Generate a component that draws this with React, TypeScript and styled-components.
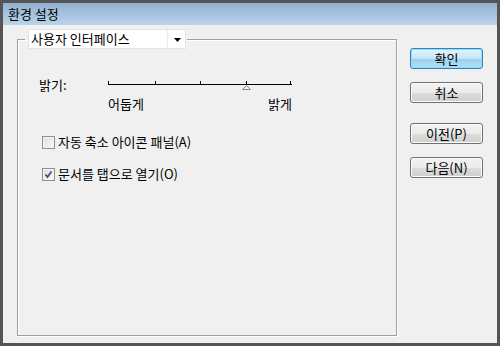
import React, { useState } from 'react';
import styled, { createGlobalStyle } from 'styled-components';

const GlobalStyle = createGlobalStyle`
  html, body {
    margin: 0;
    padding: 0;
    background: #555555;
  }
  * {
    box-sizing: border-box;
  }
`;

const FONT = `"Noto Sans CJK KR", "Noto Sans", sans-serif`;

export default function App() {
  const [autoCollapse, setAutoCollapse] = useState(false);
  const [openAsTabs, setOpenAsTabs] = useState(true);

  return (
    <>
      <GlobalStyle />
      <Window>
        <TitleBar>환경 설정</TitleBar>
        <Body>
          <Group>
            <Legend>
              <Dropdown>
                <DropdownText>사용자 인터페이스</DropdownText>
                <DropdownArrow>
                  <svg width='7' height='4' viewBox='0 0 7 4'>
                    <path d='M0 0h7L3.5 4z' fill='#000' />
                  </svg>
                </DropdownArrow>
              </Dropdown>
            </Legend>
            <Content>
              <SliderGrid>
                <Label>밝기:</Label>
                <Track />
                <span />
                <TrackLabels>
                  <span>어둡게</span>
                  <span>밝게</span>
                </TrackLabels>
              </SliderGrid>
              <CheckRow onClick={() => setAutoCollapse(!autoCollapse)} $top={24}>
                <CheckBox checked={autoCollapse} />
                <span>자동 축소 아이콘 패널(A)</span>
              </CheckRow>
              <CheckRow onClick={() => setOpenAsTabs(!openAsTabs)} $top={18}>
                <CheckBox checked={openAsTabs} />
                <span>문서를 탭으로 열기(O)</span>
              </CheckRow>
            </Content>
          </Group>
          <Buttons>
            <Button $primary>확인</Button>
            <Button $gap={13}>취소</Button>
            <Button $gap={20}>이전(P)</Button>
            <Button $gap={13}>다음(N)</Button>
          </Buttons>
        </Body>
      </Window>
    </>
  );
}

function Track() {
  const ticks = [0.5, 47.5, 92.5, 182.5];
  return (
    <svg width='184' height='14' viewBox='0 0 184 14'>
      <rect x='0' y='6' width='184' height='1' fill='#000' />
      {ticks.map((x) => (
        <line key={x} x1={x} x2={x} y1='3' y2='7' stroke='#000' strokeWidth='1' />
      ))}
      <line x1='138.5' x2='138.5' y1='3' y2='6' stroke='#000' strokeWidth='1' />
      <path d='M138.5 7.5 L142.5 11.5 L134.5 11.5 Z' fill='#f4f4f4' stroke='#8a8a8a' strokeWidth='1' />
    </svg>
  );
}

function CheckBox({ checked }: { checked: boolean }) {
  return (
    <Box>
      {checked && (
        <svg width='11' height='11' viewBox='0 0 11 11'>
          <path d='M2.5 5.5 L4.5 8 L8.5 2.5' fill='none' stroke='#3c4f8c' strokeWidth='1.8' />
        </svg>
      )}
    </Box>
  );
}

const Window = styled.div`
  width: 500px;
  height: 346px;
  border: 3px solid #555555;
  background: #f0f0f0;
  display: flex;
  flex-direction: column;
  font-family: ${FONT};
  font-size: 13px;
  color: #000;
`;

const TitleBar = styled.div`
  height: 22px;
  padding: 0 0 0 5px;
  line-height: 22px;
  font-size: 13px;
  background: linear-gradient(#93b1ce, #b9d3ec);
`;

const Body = styled.div`
  flex: 1;
  display: flex;
  padding: 4px 0 7px 14px;
`;

const Group = styled.fieldset`
  margin: 0;
  padding: 0;
  width: 380px;
  min-width: 0;
  border: 1px solid #a0a0a0;
  box-shadow: inset 1px 1px 0 #ffffff, 1px 1px 0 #ffffff;
`;

const Legend = styled.legend`
  margin-left: 7px;
  padding: 0 1px 0 3px;
`;

const Dropdown = styled.div`
  width: 158px;
  height: 20px;
  display: flex;
  background: #ffffff;
  border: 1px solid #e3e3e3;
`;

const DropdownText = styled.div`
  width: 139px;
  border-right: 1px solid #ececec;
  padding-left: 2px;
  line-height: 18px;
  font-size: 13px;
`;

const DropdownArrow = styled.div`
  flex: 1;
  display: flex;
  align-items: center;
  justify-content: center;
  padding: 1px 0 0 1px;
`;

const Content = styled.div`
  padding: 29px 0 0 21px;
`;

const SliderGrid = styled.div`
  display: grid;
  grid-template-columns: 69px 184px;
  row-gap: 5px;
  line-height: 14px;
`;

const Label = styled.span`
  line-height: 14px;
`;

const TrackLabels = styled.div`
  display: flex;
  justify-content: space-between;
  line-height: 14px;
`;

const CheckRow = styled.label<{ $top: number }>`
  display: flex;
  align-items: center;
  gap: 3px;
  margin-top: ${({ $top }) => $top}px;
  padding-left: 3px;
  line-height: 14px;
  cursor: default;
`;

const Box = styled.span`
  width: 13px;
  height: 13px;
  border: 1px solid #8e8f8f;
  background: linear-gradient(135deg, #dcdcdc, #fbfbfb);
  box-shadow: inset 0 0 0 1px #f4f4f4;
  display: flex;
  align-items: center;
  justify-content: center;
`;

const Buttons = styled.div`
  display: flex;
  flex-direction: column;
  padding: 19px 0 0 13px;
`;

const Button = styled.button<{ $primary?: boolean; $gap?: number }>`
  width: 73px;
  height: 21px;
  margin: ${({ $gap }) => $gap ?? 0}px 0 0;
  padding: 0;
  font-family: ${FONT};
  font-size: 13px;
  line-height: 19px;
  color: #000;
  border-radius: 3px;
  border: 1px solid ${({ $primary }) => ($primary ? '#3c7fb1' : '#707070')};
  background: ${({ $primary }) =>
    $primary
      ? 'linear-gradient(#e5f4fc 0%, #c4e5f6 50%, #98d1ef 51%, #b6e0f3 100%)'
      : 'linear-gradient(#f2f2f2 0%, #ebebeb 50%, #dddddd 51%, #cfcfcf 100%)'};
  box-shadow: inset 0 0 0 1px ${({ $primary }) => ($primary ? '#7de3ff' : '#fcfcfc')};
`;
